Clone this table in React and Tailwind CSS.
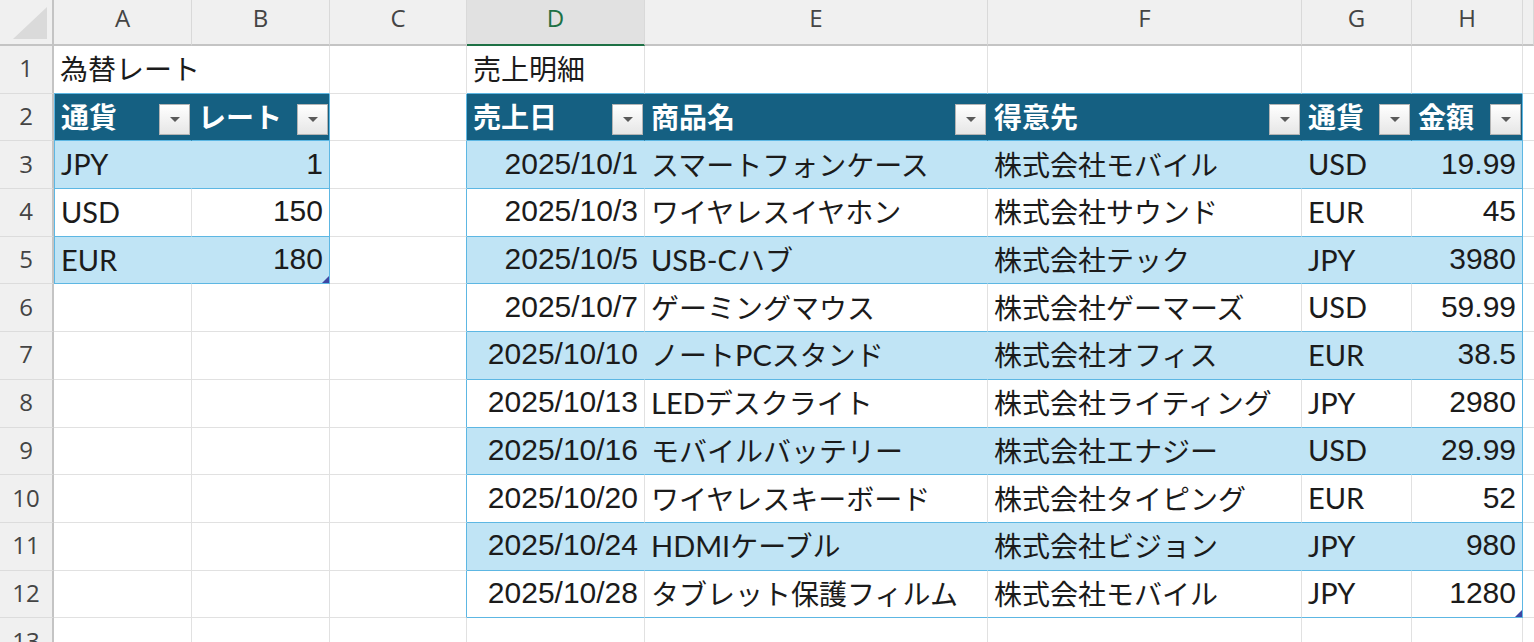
const COLS = ['A', 'B', 'C', 'D', 'E', 'F', 'G', 'H', 'I']

const TABLES = [
  { c0: 1, c1: 2, r0: 2, r1: 5 },
  { c0: 4, c1: 8, r0: 2, r1: 12 },
]

const SALES = [
  ['2025/10/1', 'スマートフォンケース', '株式会社モバイル', 'USD', '19.99'],
  ['2025/10/3', 'ワイヤレスイヤホン', '株式会社サウンド', 'EUR', '45'],
  ['2025/10/5', 'USB-Cハブ', '株式会社テック', 'JPY', '3980'],
  ['2025/10/7', 'ゲーミングマウス', '株式会社ゲーマーズ', 'USD', '59.99'],
  ['2025/10/10', 'ノートPCスタンド', '株式会社オフィス', 'EUR', '38.5'],
  ['2025/10/13', 'LEDデスクライト', '株式会社ライティング', 'JPY', '2980'],
  ['2025/10/16', 'モバイルバッテリー', '株式会社エナジー', 'USD', '29.99'],
  ['2025/10/20', 'ワイヤレスキーボード', '株式会社タイピング', 'EUR', '52'],
  ['2025/10/24', 'HDMIケーブル', '株式会社ビジョン', 'JPY', '980'],
  ['2025/10/28', 'タブレット保護フィルム', '株式会社モバイル', 'JPY', '1280'],
]

const cells = {
  A1: '為替レート',
  A2: '通貨', B2: 'レート',
  A3: 'JPY', B3: '1',
  A4: 'USD', B4: '150',
  A5: 'EUR', B5: '180',
  D1: '売上明細',
  D2: '売上日', E2: '商品名', F2: '得意先', G2: '通貨', H2: '金額',
}
SALES.forEach((row, i) => {
  row.forEach((v, j) => {
    cells[COLS[3 + j] + (i + 3)] = v
  })
})

const rightAligned = (col, r) => r >= 3 && (col === 'B' || col === 'D' || col === 'H')

function tableAt(r, ci) {
  return TABLES.find((t) => r >= t.r0 && r <= t.r1 && ci >= t.c0 && ci <= t.c1)
}

// numbers use Arial-width digits, letters Lato, Japanese Noto CJK
function Txt({ s }) {
  const parts = s.split(/([\x20-\x7e]+)/).filter(Boolean)
  return parts.map((p, i) => {
    if (/^[0-9./]+$/.test(p))
      return <span key={i} className="font-['Liberation_Sans',sans-serif] text-[30px]">{p}</span>
    if (/^[\x20-\x7e]+$/.test(p))
      return <span key={i} className="font-[Lato,sans-serif] text-[29px]">{p}</span>
    return <span key={i} className="font-['Noto_Sans_CJK_JP',sans-serif] text-[28px]">{p}</span>
  })
}

function FilterButton() {
  return (
    <div className="mb-[3px] ml-auto flex h-[31px] w-[31px] shrink-0 items-center justify-center self-end border border-[#b4b4b4] bg-linear-to-b from-white to-[#e6e6e6]">
      <div className="h-0 w-0 border-x-[5px] border-t-[5px] border-x-transparent border-t-[#5a5a5a]" />
    </div>
  )
}

function ResizeHandle() {
  return (
    <svg className="absolute right-0 bottom-0" width="7" height="7" viewBox="0 0 7 7">
      <polygon points="7,0 7,7 0,7" fill="#3e46a3" />
    </svg>
  )
}

function Cell({ r, ci }) {
  const col = COLS[ci - 1]
  const key = col + r
  const t = tableAt(r, ci)
  const isHead = t && r === t.r0
  const isBand = t && r > t.r0 && (r - t.r0) % 2 === 1

  let bg = 'bg-white'
  if (isHead) bg = 'bg-[#156082] text-white font-bold'
  else if (isBand) bg = 'bg-[#c0e4f5]'

  let br = 'border-r-[#e1e1e1]'
  const leftOfTable = TABLES.some((x) => x.c0 === ci + 1 && r >= x.r0 && r <= x.r1)
  if (t && ci === t.c1) br = 'border-r-[#5db7e3]'
  else if (leftOfTable) br = 'border-r-[#5db7e3]'
  else if (isHead) br = 'border-r-[#156082]'
  else if (isBand) br = 'border-r-[#c0e4f5]'

  let bb = 'border-b-[#e1e1e1]'
  const aboveTable = TABLES.some((x) => x.r0 === r + 1 && ci >= x.c0 && ci <= x.c1)
  if (t || aboveTable) bb = 'border-b-[#5db7e3]'

  const bl = t && ci === 1 ? 'border-l border-l-[#5db7e3]' : ''
  const align = rightAligned(col, r) ? 'justify-end' : 'justify-start'
  const pad = isHead ? 'pl-[6px] pr-px' : 'px-[6px]'
  const text = cells[key]
  const isLast = TABLES.some((x) => x.r1 === r && x.c1 === ci)

  if (key === 'B1') return null
  const span = key === 'A1' ? 'col-span-2' : ''

  return (
    <div
      className={`relative flex items-center overflow-hidden whitespace-nowrap border-r border-b pb-[2px] leading-none text-[#1b1b1b] ${span} ${bg} ${br} ${bb} ${bl} ${align} ${pad}`}
    >
      {text && (
        <span className={isHead ? 'pb-[1px]' : ''}>
          <Txt s={text} />
        </span>
      )}
      {isHead && <FilterButton />}
      {isLast && <ResizeHandle />}
    </div>
  )
}

export default function App() {
  const rows = Array.from({ length: 13 }, (_, i) => i + 1)
  return (
    <div className="h-[642px] w-[1534px] overflow-hidden bg-white">
      <div className="grid grid-cols-[54px_138px_138px_137px_178px_343px_314px_110px_111px_11px] grid-rows-[46px_repeat(13,47.7px)]">
        <div className="flex items-end justify-end border-r-2 border-b-2 border-r-[#c4c4c4] border-b-[#c4c4c4] bg-[#f0f0f0] pr-[5px] pb-[5px]">
          <svg width="34" height="32" viewBox="0 0 34 32">
            <polygon points="34,0 34,32 0,32" fill="#dadada" />
          </svg>
        </div>
        {COLS.map((c) => (
          <div
            key={c}
            className={`flex items-center justify-center border-r border-b-2 border-r-[#d9d9d9] pb-[8px] font-['Open_Sans',sans-serif] text-[24px] ${
              c === 'D'
                ? 'border-b-[#1e7145] bg-[#e1e1e1] text-[#1e7145]'
                : 'border-b-[#c4c4c4] bg-[#f0f0f0] text-[#444]'
            }`}
          >
            {c === 'I' ? '' : c}
          </div>
        ))}
        {rows.map((r) => [
          <div
            key={'h' + r}
            className="flex items-center justify-center border-r-2 border-b border-r-[#c4c4c4] border-b-[#dcdcdc] bg-[#f0f0f0] pb-[2px] font-['Open_Sans',sans-serif] text-[24px] text-[#444]"
          >
            {r}
          </div>,
          ...COLS.map((_, i) => <Cell key={r + '-' + i} r={r} ci={i + 1} />),
        ])}
      </div>
    </div>
  )
}
